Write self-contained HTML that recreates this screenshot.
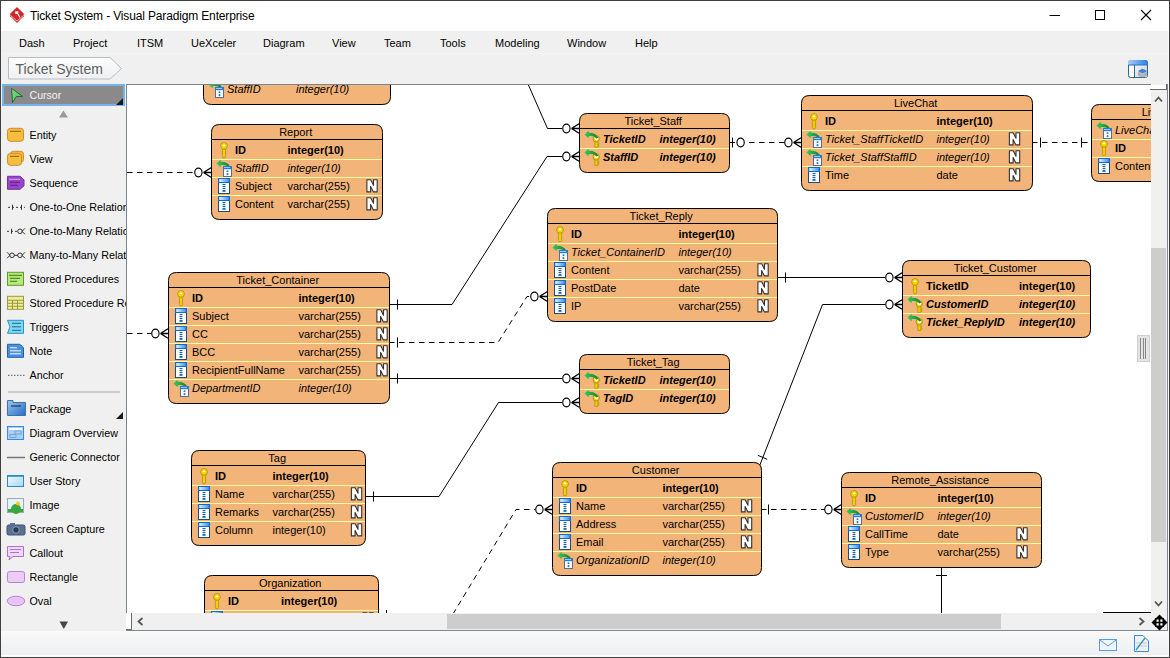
<!DOCTYPE html>
<html><head><meta charset="utf-8">
<style>
*{margin:0;padding:0;box-sizing:border-box}
html,body{width:1170px;height:658px;overflow:hidden;background:#f0f0f0;font-family:"Liberation Sans",sans-serif;position:relative}
.abs{position:absolute}
#titlebar{left:0;top:0;width:1170px;height:31px;background:#fff}
#menubar{left:0;top:31px;width:1170px;height:22px;background:#f0f0f0}
#menuline{left:0;top:53px;width:1170px;height:1px;background:#f3f3f3}
#crumbbar{left:0;top:54px;width:1170px;height:30px;background:#f0f0f0}
#palette{left:0;top:84px;width:126px;height:547px;background:#f0f0f0}
#canvas{left:127px;top:85px;width:1024px;height:528px;background:#fff;overflow:hidden}
.wb{background:#404040}
svg text{font-family:"Liberation Sans",sans-serif}
.t{font-size:11px;fill:#000}
.r{font-size:11px;fill:#000}
.b{font-size:11px;font-weight:bold;fill:#000}
.i{font-size:11px;font-style:italic;fill:#000}
.bi{font-size:11px;font-weight:bold;font-style:italic;fill:#000}
.nn{font-size:13px;font-weight:bold;fill:#fff;stroke:#333;stroke-width:1.6px;paint-order:stroke;font-family:"Liberation Sans",sans-serif}
.p{font-size:10.75px;fill:#000}
.menu{position:absolute;top:37px;font-size:11px;color:#000;white-space:nowrap}
</style></head><body>
<div id="titlebar" class="abs"></div>
<div class="abs" style="left:30px;top:9px;font-size:12px;letter-spacing:-0.15px;color:#000;white-space:nowrap">Ticket System - Visual Paradigm Enterprise</div>
<svg class="abs" style="left:0;top:0" width="30" height="30">
  <path d="M17,7 L23.9,13.8 L23.7,16.2 L17,22.9 L10.3,16.2 L10.1,13.8 Z" fill="#D0282A"/>
  <path d="M10.4,15.3 L17,21.1 L23.6,15.3" fill="none" stroke="#fff" stroke-width="0.75" opacity="0.85"/>
  <path d="M15,11.4 L18.4,11.2 L18.2,13.2 L20.4,17.3 L19.6,17.7 L17.2,13.9 L15.3,14 Z" fill="#fff"/>
</svg>
<svg class="abs" style="left:1040px;top:0" width="120" height="31">
  <line x1="9.5" y1="15.5" x2="20" y2="15.5" stroke="#000" stroke-width="1"/>
  <rect x="55.5" y="10.5" width="9" height="9" fill="none" stroke="#000" stroke-width="1"/>
  <path d="M101,10 L111,20 M111,10 L101,20" stroke="#000" stroke-width="1.1"/>
</svg>
<div id="menubar" class="abs"></div>
<div id="menuline" class="abs"></div>
<div id="crumbbar" class="abs"></div>
<div class="menu" style="left:19px">Dash</div>
<div class="menu" style="left:73px">Project</div>
<div class="menu" style="left:137px">ITSM</div>
<div class="menu" style="left:191px">UeXceler</div>
<div class="menu" style="left:263px">Diagram</div>
<div class="menu" style="left:332px">View</div>
<div class="menu" style="left:384px">Team</div>
<div class="menu" style="left:440px">Tools</div>
<div class="menu" style="left:495px">Modeling</div>
<div class="menu" style="left:567px">Window</div>
<div class="menu" style="left:635px">Help</div>
<svg class="abs" style="left:0;top:54px" width="140" height="30">
  <defs><linearGradient id="bc" x1="0" y1="0" x2="0" y2="1"><stop offset="0" stop-color="#fdfdfd"/><stop offset="1" stop-color="#eef0f2"/></linearGradient></defs>
  <path d="M8.5,3.5 H110 L121.5,14.5 L110,25 H8.5 Z" fill="url(#bc)" stroke="#b9bdc4" stroke-width="1"/>
  <text x="15.5" y="19.8" font-size="14px" fill="#5e5e5e" style="font-family:'Liberation Sans',sans-serif">Ticket System</text>
</svg>
<svg class="abs" style="left:1126px;top:58px" width="24" height="24">
  <defs><linearGradient id="tbh" x1="0" y1="0" x2="1" y2="0"><stop offset="0" stop-color="#a8d0f8"/><stop offset="1" stop-color="#2a7ce8"/></linearGradient>
  <linearGradient id="tbp" x1="0" y1="0" x2="1" y2="1"><stop offset="0" stop-color="#f4f4f4"/><stop offset="1" stop-color="#cfcfcf"/></linearGradient></defs>
  <rect x="2.5" y="2.5" width="19" height="17" rx="2" fill="#fff" stroke="#2a6a90"/>
  <rect x="9" y="7" width="12" height="12" fill="url(#tbp)"/>
  <path d="M2,7 V4.5 Q2,2 4.5,2 H19.5 Q22,2 22,4.5 V7 Z" fill="url(#tbh)"/>
  <line x1="2.5" y1="7" x2="21.5" y2="7" stroke="#2a70c0"/>
  <line x1="8.5" y1="7" x2="8.5" y2="20" stroke="#2a6a90"/>
  <path d="M12,17 L16.5,14.8 L21,17 L16.5,19.2 Z" fill="#b8bcc8" stroke="#8a8e9a" stroke-width="0.5"/>
  <path d="M12,15 L16.5,12.8 L21,15 L16.5,17.2 Z" fill="#c8ccd8" stroke="#8a8e9a" stroke-width="0.5"/>
  <path d="M12.5,13 L16.5,11 L20.5,13 L16.5,15 Z" fill="#3a88e8" stroke="#2a60b0" stroke-width="0.5"/>
</svg>
<div id="palette" class="abs"></div>
<!-- cursor selected -->
<div class="abs" style="left:2px;top:84px;width:123px;height:22px;background:#76b2ec"></div>
<div class="abs" style="left:4px;top:86px;width:119px;height:18px;background:#8a8a8a"></div>
<svg class="abs" style="left:0;top:84px" width="126" height="547">
  <defs><linearGradient id="pkg" x1="0" y1="0" x2="1" y2="1"><stop offset="0" stop-color="#9cc8f0"/><stop offset="1" stop-color="#2a6ac0"/></linearGradient>
  <linearGradient id="usg" x1="0" y1="0" x2="1" y2="1"><stop offset="0" stop-color="#f0f8ff"/><stop offset="1" stop-color="#a8d8f0"/></linearGradient></defs>
  <defs><linearGradient id="cur" x1="0" y1="0" x2="1" y2="1"><stop offset="0" stop-color="#90c890"/><stop offset="1" stop-color="#20e040"/></linearGradient></defs><path d="M11.5,4.3 L22.6,12.4 L16.3,12.6 L12.5,18.6 Z" fill="url(#cur)" stroke="#2a5a38" stroke-width="0.9" stroke-linejoin="round"/>
  <text x="29.5" y="14.7" class="p" style="fill:#f2f2f2;font-size:10.6px">Cursor</text>
  <path d="M123,14 L123,21 L116,21 Z" fill="#1a1a1a"/>
  <path d="M63.5,26.5 L68,33.5 L59,33.5 Z" fill="#9a9a9a"/>
  <line x1="8" y1="308" x2="120" y2="308" stroke="#c8c8c8" stroke-width="2"/>
  <path d="M123,328 L123,335 L116,335 Z" fill="#1a1a1a"/>
  <path d="M59.5,537.5 L68,537.5 L63.8,545 Z" fill="#444"/>
  <g transform="translate(0,-84)">
<rect x="7.5" y="128.3" width="16" height="13" rx="3" fill="#F7BE3E" stroke="#D08A2A"/><line x1="10" y1="131.3" x2="21" y2="131.3" stroke="#8a5a10"/>
<text x="29.5" y="138.8" class="p">Entity</text>
<rect x="10.5" y="151.3" width="13" height="11" rx="3" fill="#F7BE3E" stroke="#D08A2A"/><rect x="7.5" y="153.3" width="14" height="12" rx="3" fill="#F7BE3E" stroke="#D08A2A"/><line x1="10" y1="156.3" x2="19" y2="156.3" stroke="#8a5a10"/>
<text x="29.5" y="162.8" class="p">View</text>
<path d="M7.5,176.3 H20 L24,179.8 V185.8 L20,189.3 H7.5 Z" fill="#9B45C8" stroke="#7030A0"/><line x1="9" y1="179.3" x2="20" y2="179.3" stroke="#D8A8F0"/><line x1="10" y1="182.3" x2="20" y2="182.3" stroke="#5a2080"/><line x1="10" y1="185.3" x2="18" y2="185.3" stroke="#5a2080"/>
<text x="29.5" y="186.8" class="p">Sequence</text>
<path d="M8,207.3 H25" stroke="#333" stroke-dasharray="2,2"/><line x1="12.5" y1="204.8" x2="12.5" y2="209.8" stroke="#333"/><line x1="21.5" y1="204.8" x2="21.5" y2="209.8" stroke="#333"/>
<text x="29.5" y="210.8" class="p">One-to-One Relationship</text>
<path d="M7,231.3 H18" stroke="#333" stroke-dasharray="2,2"/><line x1="11.5" y1="228.8" x2="11.5" y2="233.8" stroke="#333"/><circle cx="20" cy="231.3" r="2.3" fill="none" stroke="#333"/><path d="M22,231.3 L25,228.3 M22,231.3 L25,234.3" stroke="#333" fill="none"/>
<text x="29.5" y="234.8" class="p">One-to-Many Relationship</text>
<path d="M7,252.3 L10,255.3 L7,258.3" stroke="#333" fill="none"/><circle cx="12" cy="255.3" r="2.3" fill="none" stroke="#333"/><path d="M14,255.3 H18" stroke="#333"/><circle cx="20" cy="255.3" r="2.3" fill="none" stroke="#333"/><path d="M22,255.3 L25,252.3 M22,255.3 L25,258.3" stroke="#333" fill="none"/>
<text x="29.5" y="258.8" class="p">Many-to-Many Relationship</text>
<rect x="7.5" y="272.3" width="16" height="13" fill="#B8E878" stroke="#5A9A30"/><line x1="9" y1="275.3" x2="22" y2="275.3" stroke="#3a7a20"/><line x1="10" y1="278.3" x2="20" y2="278.3" stroke="#3a7a20"/><line x1="10" y1="281.3" x2="17" y2="281.3" stroke="#3a7a20"/>
<text x="29.5" y="282.8" class="p">Stored Procedures</text>
<rect x="7.5" y="296.3" width="16" height="13" fill="#EEEE9A" stroke="#9A9A40"/><path d="M7.5,300.3 H23.5 M7.5,303.3 H23.5 M7.5,306.3 H23.5 M12.5,300.3 V309.3 M17.5,300.3 V309.3" stroke="#9A9A40"/>
<text x="29.5" y="306.8" class="p">Stored Procedure Resultset</text>
<path d="M7.5,320.3 H23.5 V333.3 H7.5 L10,326.8 Z" fill="#7ED8F0" stroke="#2A90C0"/><line x1="12" y1="323.3" x2="21" y2="323.3" stroke="#1a6a90"/><line x1="12" y1="326.8" x2="21" y2="326.8" stroke="#1a6a90"/><line x1="12" y1="330.3" x2="21" y2="330.3" stroke="#1a6a90"/>
<text x="29.5" y="330.8" class="p">Triggers</text>
<path d="M7.5,344.3 H20 L23.5,347.8 V357.3 H7.5 Z" fill="#4A90E0" stroke="#2060B0"/><line x1="10" y1="347.8" x2="17" y2="347.8" stroke="#fff"/><line x1="10" y1="350.8" x2="21" y2="350.8" stroke="#fff"/><line x1="10" y1="353.8" x2="21" y2="353.8" stroke="#fff"/>
<text x="29.5" y="354.8" class="p">Note</text>
<path d="M8,375.3 H25" stroke="#555" stroke-dasharray="1.5,1.5"/>
<text x="29.5" y="378.8" class="p">Anchor</text>
<path d="M7.5,400.5 H13 V402.5 H25.5 V415.5 H7.5 Z" fill="url(#pkg)" stroke="#3A72B0"/><line x1="11" y1="406" x2="21" y2="406" stroke="#1a3a60" stroke-width="1.2"/>
<text x="29.5" y="413" class="p">Package</text>
<rect x="7.5" y="426.5" width="16" height="13" fill="#A8D0F8" stroke="#3A8AE0"/><rect x="9" y="428" width="13" height="2" fill="#fff"/><rect x="15" y="431" width="6" height="3" fill="none" stroke="#6a9ad0" stroke-width="0.8"/><rect x="10" y="434.5" width="6" height="3" fill="none" stroke="#6a9ad0" stroke-width="0.8"/>
<text x="29.5" y="437" class="p">Diagram Overview</text>
<line x1="7" y1="457.5" x2="25" y2="457.5" stroke="#777" stroke-width="1.5"/>
<text x="29.5" y="461" class="p">Generic Connector</text>
<rect x="7.5" y="475.5" width="16" height="11" fill="url(#usg)" stroke="#2A8AC0"/><line x1="8" y1="476.5" x2="23" y2="476.5" stroke="#4aa0d8"/>
<text x="29.5" y="485" class="p">User Story</text>
<rect x="7.5" y="498.5" width="16" height="14" fill="#E8F0F8" stroke="#9AAABB"/><circle cx="16" cy="509" r="5" fill="#3AA840"/><circle cx="18" cy="503.5" r="2" fill="#F8C820"/><rect x="8" y="509" width="15" height="3" fill="#3AA840"/>
<text x="29.5" y="509" class="p">Image</text>
<rect x="7" y="525" width="18" height="10" rx="1.5" fill="#5A7090" stroke="#405070"/><rect x="10" y="523" width="5" height="3" fill="#5A7090"/><circle cx="16" cy="530" r="3.3" fill="#2a3a50" stroke="#8aa0c0"/>
<text x="29.5" y="533" class="p">Screen Capture</text>
<path d="M7.5,546.5 H23.5 V556.5 H13 L9,560 L10,556.5 H7.5 Z" fill="#F0D8F8" stroke="#B070D0"/><line x1="10" y1="549.5" x2="21" y2="549.5" stroke="#B070D0"/><line x1="10" y1="552.5" x2="19" y2="552.5" stroke="#B070D0"/>
<text x="29.5" y="557" class="p">Callout</text>
<rect x="7.5" y="571.5" width="17" height="11" rx="2" fill="#EACCF4" stroke="#B880D0"/>
<text x="29.5" y="581" class="p">Rectangle</text>
<ellipse cx="16" cy="601" rx="8.8" ry="4.8" fill="#E8C4F4" stroke="#C080E0"/>
<text x="29.5" y="605" class="p">Oval</text>
  </g>
</svg>
<!-- canvas -->
<div class="abs" style="left:126px;top:84px;width:1025px;height:1px;background:#7b8290"></div>
<div class="abs" style="left:126px;top:84px;width:1px;height:529px;background:#7b8290"></div>
<div id="canvas" class="abs">
<svg width="1024" height="528" style="position:absolute;left:0;top:0">
<g transform="translate(-127,-85)">
<defs><linearGradient id="hg" x1="0" y1="0" x2="1" y2="0"><stop offset="0" stop-color="#e0f0ff"/><stop offset="1" stop-color="#4a90e8"/></linearGradient><linearGradient id="ag" x1="0" y1="0" x2="1" y2="0"><stop offset="0" stop-color="#30d060"/><stop offset="1" stop-color="#108030"/></linearGradient></defs><path d="M528,84 L547.5,128.5 L562,128.5" fill="none" stroke="#000" stroke-width="1"/>
<path d="M571.5,128.5 L579,123.7 M571.5,128.5 L579,128.5 M571.5,128.5 L579,133.3" fill="none" stroke="#000" stroke-width="1.35"/>
<ellipse cx="566.4" cy="128.5" rx="3.65" ry="4.35" fill="#fff" stroke="#000" stroke-width="1.15"/>
<path d="M389,304.5 L452,304.5 L547,156.5 L562,156.5" fill="none" stroke="#000" stroke-width="1"/>
<path d="M571.5,156.5 L579,151.7 M571.5,156.5 L579,156.5 M571.5,156.5 L579,161.3" fill="none" stroke="#000" stroke-width="1.35"/>
<ellipse cx="566.4" cy="156.5" rx="3.65" ry="4.35" fill="#fff" stroke="#000" stroke-width="1.15"/>
<line x1="397.5" y1="299.5" x2="397.5" y2="309.5" stroke="#000" stroke-width="1"/>
<path d="M389,342.5 L498,342.5 L527,296.5 L530,296.5" fill="none" stroke="#000" stroke-width="1" stroke-dasharray="5.5,4.5"/>
<path d="M539.5,296.5 L547,291.7 M539.5,296.5 L547,296.5 M539.5,296.5 L547,301.3" fill="none" stroke="#000" stroke-width="1.35"/>
<ellipse cx="534.4" cy="296.5" rx="3.65" ry="4.35" fill="#fff" stroke="#000" stroke-width="1.15"/>
<line x1="397.5" y1="337.5" x2="397.5" y2="347.5" stroke="#000" stroke-width="1"/>
<path d="M389,378.5 L562,378.5" fill="none" stroke="#000" stroke-width="1"/>
<path d="M571.5,378.5 L579,373.7 M571.5,378.5 L579,378.5 M571.5,378.5 L579,383.3" fill="none" stroke="#000" stroke-width="1.35"/>
<ellipse cx="566.4" cy="378.5" rx="3.65" ry="4.35" fill="#fff" stroke="#000" stroke-width="1.15"/>
<line x1="397.5" y1="373.5" x2="397.5" y2="383.5" stroke="#000" stroke-width="1"/>
<path d="M365,496.5 L439,496.5 L498.5,402.5 L562,402.5" fill="none" stroke="#000" stroke-width="1"/>
<path d="M571.5,402.5 L579,397.7 M571.5,402.5 L579,402.5 M571.5,402.5 L579,407.3" fill="none" stroke="#000" stroke-width="1.35"/>
<ellipse cx="566.4" cy="402.5" rx="3.65" ry="4.35" fill="#fff" stroke="#000" stroke-width="1.15"/>
<line x1="373.5" y1="491.5" x2="373.5" y2="501.5" stroke="#000" stroke-width="1"/>
<path d="M127,172.5 L194,172.5" fill="none" stroke="#000" stroke-width="1" stroke-dasharray="5.5,4.5"/>
<path d="M203.5,172.5 L211,167.7 M203.5,172.5 L211,172.5 M203.5,172.5 L211,177.3" fill="none" stroke="#000" stroke-width="1.35"/>
<ellipse cx="198.4" cy="172.5" rx="3.65" ry="4.35" fill="#fff" stroke="#000" stroke-width="1.15"/>
<path d="M127,333.5 L152,333.5" fill="none" stroke="#000" stroke-width="1" stroke-dasharray="5.5,4.5"/>
<path d="M160.5,333.5 L168,328.7 M160.5,333.5 L168,333.5 M160.5,333.5 L168,338.3" fill="none" stroke="#000" stroke-width="1.35"/>
<ellipse cx="155.4" cy="333.5" rx="3.65" ry="4.35" fill="#fff" stroke="#000" stroke-width="1.15"/>
<path d="M729,142.5 L735,142.5" fill="none" stroke="#000" stroke-width="1"/>
<line x1="732.5" y1="137.5" x2="732.5" y2="147.5" stroke="#000" stroke-width="1"/>
<ellipse cx="740.6" cy="142.5" rx="3.65" ry="4.35" fill="#fff" stroke="#000" stroke-width="1.15"/>
<path d="M749,142.5 L785,142.5" fill="none" stroke="#000" stroke-width="1" stroke-dasharray="5.5,4.5"/>
<path d="M793.5,142.5 L801,137.7 M793.5,142.5 L801,142.5 M793.5,142.5 L801,147.3" fill="none" stroke="#000" stroke-width="1.35"/>
<ellipse cx="788.4" cy="142.5" rx="3.65" ry="4.35" fill="#fff" stroke="#000" stroke-width="1.15"/>
<path d="M1032,142.5 L1091,142.5" fill="none" stroke="#000" stroke-width="1" stroke-dasharray="5.5,4.5"/>
<line x1="1040.5" y1="137.5" x2="1040.5" y2="147.5" stroke="#000" stroke-width="1"/>
<line x1="1081.5" y1="137.5" x2="1081.5" y2="147.5" stroke="#000" stroke-width="1"/>
<path d="M777,277.5 L885,277.5" fill="none" stroke="#000" stroke-width="1"/>
<path d="M894.5,277.5 L902,272.7 M894.5,277.5 L902,277.5 M894.5,277.5 L902,282.3" fill="none" stroke="#000" stroke-width="1.35"/>
<ellipse cx="889.4" cy="277.5" rx="3.65" ry="4.35" fill="#fff" stroke="#000" stroke-width="1.15"/>
<line x1="785.5" y1="272.5" x2="785.5" y2="282.5" stroke="#000" stroke-width="1"/>
<path d="M759.5,466 L822.5,304.5 L885,304.5" fill="none" stroke="#000" stroke-width="1"/>
<path d="M894.5,304.5 L902,299.7 M894.5,304.5 L902,304.5 M894.5,304.5 L902,309.3" fill="none" stroke="#000" stroke-width="1.35"/>
<ellipse cx="889.4" cy="304.5" rx="3.65" ry="4.35" fill="#fff" stroke="#000" stroke-width="1.15"/>
<line x1="757.8" y1="455.3" x2="767.2" y2="459.3" stroke="#000" stroke-width="1"/>
<path d="M761,509.5 L825,509.5" fill="none" stroke="#000" stroke-width="1" stroke-dasharray="5.5,4.5"/>
<path d="M833.5,509.5 L841,504.7 M833.5,509.5 L841,509.5 M833.5,509.5 L841,514.3" fill="none" stroke="#000" stroke-width="1.35"/>
<ellipse cx="828.4" cy="509.5" rx="3.65" ry="4.35" fill="#fff" stroke="#000" stroke-width="1.15"/>
<line x1="768.5" y1="504.5" x2="768.5" y2="514.5" stroke="#000" stroke-width="1"/>
<path d="M941.5,567 L941.5,613" fill="none" stroke="#000" stroke-width="1"/>
<line x1="936" y1="575.5" x2="947" y2="575.5" stroke="#000" stroke-width="1"/>
<path d="M453,614 L516,509.5 L535,509.5" fill="none" stroke="#000" stroke-width="1" stroke-dasharray="5.5,4.5"/>
<path d="M544.5,509.5 L552,504.7 M544.5,509.5 L552,509.5 M544.5,509.5 L552,514.3" fill="none" stroke="#000" stroke-width="1.35"/>
<ellipse cx="539.4" cy="509.5" rx="3.65" ry="4.35" fill="#fff" stroke="#000" stroke-width="1.15"/>
<line x1="386.5" y1="610" x2="386.5" y2="613" stroke="#000" stroke-width="1"/>
<line x1="1103" y1="612.5" x2="1151" y2="612.5" stroke="#000" stroke-width="1"/>
<path d="M211.5,9.5 H382.5 Q390.5,9.5 390.5,17.5 V96.5 Q390.5,104.5 382.5,104.5 H211.5 Q203.5,104.5 203.5,96.5 V17.5 Q203.5,9.5 211.5,9.5 Z" fill="#F3B47A" stroke="#000" stroke-width="1"/>
<line x1="203" y1="24.5" x2="391" y2="24.5" stroke="#000" stroke-width="1"/>
<line x1="204" y1="44.5" x2="390" y2="44.5" stroke="#FFFFA0" stroke-width="1"/>
<line x1="204" y1="62.5" x2="390" y2="62.5" stroke="#FFFFA0" stroke-width="1"/>
<line x1="204" y1="80.5" x2="390" y2="80.5" stroke="#FFFFA0" stroke-width="1"/>
<g transform="translate(212,27)"><path d="M2.4,6 V14.6 Q2.4,15.8 4,15.8 Q5.6,15.8 5.6,14.6 V6 Z" fill="#F0CC00" stroke="#B08C00" stroke-width="0.7"/><circle cx="4" cy="3.9" r="3.4" fill="#F4D600" stroke="#B08C00" stroke-width="0.8"/><ellipse cx="4" cy="3.3" rx="1.3" ry="0.9" fill="#fff"/></g>
<text x="227" y="39" class="b">x</text>
<text x="296" y="39" class="b">x</text>
<g transform="translate(210,45)"><rect x="0.5" y="0.5" width="11" height="15" fill="#fff" stroke="#1a4a88" stroke-width="1"/><rect x="0" y="0" width="12" height="5" fill="#0a6ad8"/><rect x="1.2" y="1" width="9.6" height="3" fill="url(#hg)"/><ellipse cx="6" cy="6.6" rx="1.8" ry="0.6" fill="#0a5a9a"/><ellipse cx="6" cy="8.6" rx="1.8" ry="0.6" fill="#0a5a9a"/><ellipse cx="6" cy="10.6" rx="1.8" ry="0.6" fill="#0a5a9a"/><ellipse cx="6" cy="12.9" rx="1.8" ry="0.9" fill="#0a5a9a"/></g>
<text x="227" y="57" class="r">x</text>
<text x="296" y="57" class="r">x</text>
<g transform="translate(210,63)"><rect x="0.5" y="0.5" width="11" height="15" fill="#fff" stroke="#1a4a88" stroke-width="1"/><rect x="0" y="0" width="12" height="5" fill="#0a6ad8"/><rect x="1.2" y="1" width="9.6" height="3" fill="url(#hg)"/><ellipse cx="6" cy="6.6" rx="1.8" ry="0.6" fill="#0a5a9a"/><ellipse cx="6" cy="8.6" rx="1.8" ry="0.6" fill="#0a5a9a"/><ellipse cx="6" cy="10.6" rx="1.8" ry="0.6" fill="#0a5a9a"/><ellipse cx="6" cy="12.9" rx="1.8" ry="0.9" fill="#0a5a9a"/></g>
<text x="227" y="75" class="r">x</text>
<text x="296" y="75" class="r">x</text>
<path transform="translate(208,81)" d="M0.4,3.6 L4.6,-0.2 L4.6,1.7 C8.5,1.3 12.5,2.8 14.2,6.8 L12.2,7.4 C10.5,5.0 7.8,4.6 4.6,5.2 L4.6,7.2 Z" fill="url(#ag)"/><g transform="translate(215,87)"><rect x="0.5" y="0.5" width="8" height="10" fill="#fff" stroke="#5a6a98" stroke-width="1"/><rect x="0" y="0" width="9" height="3.2" fill="#2a7ad8"/><rect x="1" y="1" width="6" height="1" fill="#9ac8f8"/><ellipse cx="4.5" cy="5.2" rx="1" ry="0.9" fill="#2a7ab8"/><ellipse cx="4.5" cy="8.2" rx="1" ry="1.1" fill="#2a7ab8"/></g>
<text x="227" y="93" class="i">StaffID</text>
<text x="296" y="93" class="i">integer(10)</text>
<path d="M219.5,124.5 H374.5 Q382.5,124.5 382.5,132.5 V211.5 Q382.5,219.5 374.5,219.5 H219.5 Q211.5,219.5 211.5,211.5 V132.5 Q211.5,124.5 219.5,124.5 Z" fill="#F3B47A" stroke="#000" stroke-width="1"/>
<line x1="211" y1="139.5" x2="383" y2="139.5" stroke="#000" stroke-width="1"/>
<line x1="212" y1="159.5" x2="382" y2="159.5" stroke="#FFFFA0" stroke-width="1"/>
<line x1="212" y1="177.5" x2="382" y2="177.5" stroke="#FFFFA0" stroke-width="1"/>
<line x1="212" y1="195.5" x2="382" y2="195.5" stroke="#FFFFA0" stroke-width="1"/>
<text x="295.7" y="136" text-anchor="middle" class="t">Report</text>
<g transform="translate(220,142)"><path d="M2.4,6 V14.6 Q2.4,15.8 4,15.8 Q5.6,15.8 5.6,14.6 V6 Z" fill="#F0CC00" stroke="#B08C00" stroke-width="0.7"/><circle cx="4" cy="3.9" r="3.4" fill="#F4D600" stroke="#B08C00" stroke-width="0.8"/><ellipse cx="4" cy="3.3" rx="1.3" ry="0.9" fill="#fff"/></g>
<text x="235" y="154" class="b">ID</text>
<text x="287.5" y="154" class="b">integer(10)</text>
<path transform="translate(216,160)" d="M0.4,3.6 L4.6,-0.2 L4.6,1.7 C8.5,1.3 12.5,2.8 14.2,6.8 L12.2,7.4 C10.5,5.0 7.8,4.6 4.6,5.2 L4.6,7.2 Z" fill="url(#ag)"/><g transform="translate(223,166)"><rect x="0.5" y="0.5" width="8" height="10" fill="#fff" stroke="#5a6a98" stroke-width="1"/><rect x="0" y="0" width="9" height="3.2" fill="#2a7ad8"/><rect x="1" y="1" width="6" height="1" fill="#9ac8f8"/><ellipse cx="4.5" cy="5.2" rx="1" ry="0.9" fill="#2a7ab8"/><ellipse cx="4.5" cy="8.2" rx="1" ry="1.1" fill="#2a7ab8"/></g>
<text x="235" y="172" class="i">StaffID</text>
<text x="287.5" y="172" class="i">integer(10)</text>
<g transform="translate(218,178)"><rect x="0.5" y="0.5" width="11" height="15" fill="#fff" stroke="#1a4a88" stroke-width="1"/><rect x="0" y="0" width="12" height="5" fill="#0a6ad8"/><rect x="1.2" y="1" width="9.6" height="3" fill="url(#hg)"/><ellipse cx="6" cy="6.6" rx="1.8" ry="0.6" fill="#0a5a9a"/><ellipse cx="6" cy="8.6" rx="1.8" ry="0.6" fill="#0a5a9a"/><ellipse cx="6" cy="10.6" rx="1.8" ry="0.6" fill="#0a5a9a"/><ellipse cx="6" cy="12.9" rx="1.8" ry="0.9" fill="#0a5a9a"/></g>
<text x="235" y="190" class="r">Subject</text>
<text x="287.5" y="190" class="r">varchar(255)</text>
<path transform="translate(366,179)" d="M0.9,0.7 H4.7 L7.5,6.2 V0.7 H11.2 V12.9 H7.4 L4.6,7.5 V12.9 H0.9 Z" fill="#fff" stroke="#333" stroke-width="1.1" stroke-linejoin="round"/>
<g transform="translate(218,196)"><rect x="0.5" y="0.5" width="11" height="15" fill="#fff" stroke="#1a4a88" stroke-width="1"/><rect x="0" y="0" width="12" height="5" fill="#0a6ad8"/><rect x="1.2" y="1" width="9.6" height="3" fill="url(#hg)"/><ellipse cx="6" cy="6.6" rx="1.8" ry="0.6" fill="#0a5a9a"/><ellipse cx="6" cy="8.6" rx="1.8" ry="0.6" fill="#0a5a9a"/><ellipse cx="6" cy="10.6" rx="1.8" ry="0.6" fill="#0a5a9a"/><ellipse cx="6" cy="12.9" rx="1.8" ry="0.9" fill="#0a5a9a"/></g>
<text x="235" y="208" class="r">Content</text>
<text x="287.5" y="208" class="r">varchar(255)</text>
<path transform="translate(366,197)" d="M0.9,0.7 H4.7 L7.5,6.2 V0.7 H11.2 V12.9 H7.4 L4.6,7.5 V12.9 H0.9 Z" fill="#fff" stroke="#333" stroke-width="1.1" stroke-linejoin="round"/>
<path d="M176.5,272.5 H381.5 Q389.5,272.5 389.5,280.5 V395.5 Q389.5,403.5 381.5,403.5 H176.5 Q168.5,403.5 168.5,395.5 V280.5 Q168.5,272.5 176.5,272.5 Z" fill="#F3B47A" stroke="#000" stroke-width="1"/>
<line x1="168" y1="287.5" x2="390" y2="287.5" stroke="#000" stroke-width="1"/>
<line x1="169" y1="307.5" x2="389" y2="307.5" stroke="#FFFFA0" stroke-width="1"/>
<line x1="169" y1="325.5" x2="389" y2="325.5" stroke="#FFFFA0" stroke-width="1"/>
<line x1="169" y1="343.5" x2="389" y2="343.5" stroke="#FFFFA0" stroke-width="1"/>
<line x1="169" y1="361.5" x2="389" y2="361.5" stroke="#FFFFA0" stroke-width="1"/>
<line x1="169" y1="379.5" x2="389" y2="379.5" stroke="#FFFFA0" stroke-width="1"/>
<text x="277.7" y="284" text-anchor="middle" class="t">Ticket_Container</text>
<g transform="translate(177,290)"><path d="M2.4,6 V14.6 Q2.4,15.8 4,15.8 Q5.6,15.8 5.6,14.6 V6 Z" fill="#F0CC00" stroke="#B08C00" stroke-width="0.7"/><circle cx="4" cy="3.9" r="3.4" fill="#F4D600" stroke="#B08C00" stroke-width="0.8"/><ellipse cx="4" cy="3.3" rx="1.3" ry="0.9" fill="#fff"/></g>
<text x="192" y="302" class="b">ID</text>
<text x="298.5" y="302" class="b">integer(10)</text>
<g transform="translate(175,308)"><rect x="0.5" y="0.5" width="11" height="15" fill="#fff" stroke="#1a4a88" stroke-width="1"/><rect x="0" y="0" width="12" height="5" fill="#0a6ad8"/><rect x="1.2" y="1" width="9.6" height="3" fill="url(#hg)"/><ellipse cx="6" cy="6.6" rx="1.8" ry="0.6" fill="#0a5a9a"/><ellipse cx="6" cy="8.6" rx="1.8" ry="0.6" fill="#0a5a9a"/><ellipse cx="6" cy="10.6" rx="1.8" ry="0.6" fill="#0a5a9a"/><ellipse cx="6" cy="12.9" rx="1.8" ry="0.9" fill="#0a5a9a"/></g>
<text x="192" y="320" class="r">Subject</text>
<text x="298.5" y="320" class="r">varchar(255)</text>
<path transform="translate(376,309)" d="M0.9,0.7 H4.7 L7.5,6.2 V0.7 H11.2 V12.9 H7.4 L4.6,7.5 V12.9 H0.9 Z" fill="#fff" stroke="#333" stroke-width="1.1" stroke-linejoin="round"/>
<g transform="translate(175,326)"><rect x="0.5" y="0.5" width="11" height="15" fill="#fff" stroke="#1a4a88" stroke-width="1"/><rect x="0" y="0" width="12" height="5" fill="#0a6ad8"/><rect x="1.2" y="1" width="9.6" height="3" fill="url(#hg)"/><ellipse cx="6" cy="6.6" rx="1.8" ry="0.6" fill="#0a5a9a"/><ellipse cx="6" cy="8.6" rx="1.8" ry="0.6" fill="#0a5a9a"/><ellipse cx="6" cy="10.6" rx="1.8" ry="0.6" fill="#0a5a9a"/><ellipse cx="6" cy="12.9" rx="1.8" ry="0.9" fill="#0a5a9a"/></g>
<text x="192" y="338" class="r">CC</text>
<text x="298.5" y="338" class="r">varchar(255)</text>
<path transform="translate(376,327)" d="M0.9,0.7 H4.7 L7.5,6.2 V0.7 H11.2 V12.9 H7.4 L4.6,7.5 V12.9 H0.9 Z" fill="#fff" stroke="#333" stroke-width="1.1" stroke-linejoin="round"/>
<g transform="translate(175,344)"><rect x="0.5" y="0.5" width="11" height="15" fill="#fff" stroke="#1a4a88" stroke-width="1"/><rect x="0" y="0" width="12" height="5" fill="#0a6ad8"/><rect x="1.2" y="1" width="9.6" height="3" fill="url(#hg)"/><ellipse cx="6" cy="6.6" rx="1.8" ry="0.6" fill="#0a5a9a"/><ellipse cx="6" cy="8.6" rx="1.8" ry="0.6" fill="#0a5a9a"/><ellipse cx="6" cy="10.6" rx="1.8" ry="0.6" fill="#0a5a9a"/><ellipse cx="6" cy="12.9" rx="1.8" ry="0.9" fill="#0a5a9a"/></g>
<text x="192" y="356" class="r">BCC</text>
<text x="298.5" y="356" class="r">varchar(255)</text>
<path transform="translate(376,345)" d="M0.9,0.7 H4.7 L7.5,6.2 V0.7 H11.2 V12.9 H7.4 L4.6,7.5 V12.9 H0.9 Z" fill="#fff" stroke="#333" stroke-width="1.1" stroke-linejoin="round"/>
<g transform="translate(175,362)"><rect x="0.5" y="0.5" width="11" height="15" fill="#fff" stroke="#1a4a88" stroke-width="1"/><rect x="0" y="0" width="12" height="5" fill="#0a6ad8"/><rect x="1.2" y="1" width="9.6" height="3" fill="url(#hg)"/><ellipse cx="6" cy="6.6" rx="1.8" ry="0.6" fill="#0a5a9a"/><ellipse cx="6" cy="8.6" rx="1.8" ry="0.6" fill="#0a5a9a"/><ellipse cx="6" cy="10.6" rx="1.8" ry="0.6" fill="#0a5a9a"/><ellipse cx="6" cy="12.9" rx="1.8" ry="0.9" fill="#0a5a9a"/></g>
<text x="192" y="374" class="r">RecipientFullName</text>
<text x="298.5" y="374" class="r">varchar(255)</text>
<path transform="translate(376,363)" d="M0.9,0.7 H4.7 L7.5,6.2 V0.7 H11.2 V12.9 H7.4 L4.6,7.5 V12.9 H0.9 Z" fill="#fff" stroke="#333" stroke-width="1.1" stroke-linejoin="round"/>
<path transform="translate(173,380)" d="M0.4,3.6 L4.6,-0.2 L4.6,1.7 C8.5,1.3 12.5,2.8 14.2,6.8 L12.2,7.4 C10.5,5.0 7.8,4.6 4.6,5.2 L4.6,7.2 Z" fill="url(#ag)"/><g transform="translate(180,386)"><rect x="0.5" y="0.5" width="8" height="10" fill="#fff" stroke="#5a6a98" stroke-width="1"/><rect x="0" y="0" width="9" height="3.2" fill="#2a7ad8"/><rect x="1" y="1" width="6" height="1" fill="#9ac8f8"/><ellipse cx="4.5" cy="5.2" rx="1" ry="0.9" fill="#2a7ab8"/><ellipse cx="4.5" cy="8.2" rx="1" ry="1.1" fill="#2a7ab8"/></g>
<text x="192" y="392" class="i">DepartmentID</text>
<text x="298.5" y="392" class="i">integer(10)</text>
<path d="M199.5,450.5 H357.5 Q365.5,450.5 365.5,458.5 V537.5 Q365.5,545.5 357.5,545.5 H199.5 Q191.5,545.5 191.5,537.5 V458.5 Q191.5,450.5 199.5,450.5 Z" fill="#F3B47A" stroke="#000" stroke-width="1"/>
<line x1="191" y1="465.5" x2="366" y2="465.5" stroke="#000" stroke-width="1"/>
<line x1="192" y1="485.5" x2="365" y2="485.5" stroke="#FFFFA0" stroke-width="1"/>
<line x1="192" y1="503.5" x2="365" y2="503.5" stroke="#FFFFA0" stroke-width="1"/>
<line x1="192" y1="521.5" x2="365" y2="521.5" stroke="#FFFFA0" stroke-width="1"/>
<text x="277.2" y="462" text-anchor="middle" class="t">Tag</text>
<g transform="translate(200,468)"><path d="M2.4,6 V14.6 Q2.4,15.8 4,15.8 Q5.6,15.8 5.6,14.6 V6 Z" fill="#F0CC00" stroke="#B08C00" stroke-width="0.7"/><circle cx="4" cy="3.9" r="3.4" fill="#F4D600" stroke="#B08C00" stroke-width="0.8"/><ellipse cx="4" cy="3.3" rx="1.3" ry="0.9" fill="#fff"/></g>
<text x="215" y="480" class="b">ID</text>
<text x="272.5" y="480" class="b">integer(10)</text>
<g transform="translate(198,486)"><rect x="0.5" y="0.5" width="11" height="15" fill="#fff" stroke="#1a4a88" stroke-width="1"/><rect x="0" y="0" width="12" height="5" fill="#0a6ad8"/><rect x="1.2" y="1" width="9.6" height="3" fill="url(#hg)"/><ellipse cx="6" cy="6.6" rx="1.8" ry="0.6" fill="#0a5a9a"/><ellipse cx="6" cy="8.6" rx="1.8" ry="0.6" fill="#0a5a9a"/><ellipse cx="6" cy="10.6" rx="1.8" ry="0.6" fill="#0a5a9a"/><ellipse cx="6" cy="12.9" rx="1.8" ry="0.9" fill="#0a5a9a"/></g>
<text x="215" y="498" class="r">Name</text>
<text x="272.5" y="498" class="r">varchar(255)</text>
<path transform="translate(350.5,487)" d="M0.9,0.7 H4.7 L7.5,6.2 V0.7 H11.2 V12.9 H7.4 L4.6,7.5 V12.9 H0.9 Z" fill="#fff" stroke="#333" stroke-width="1.1" stroke-linejoin="round"/>
<g transform="translate(198,504)"><rect x="0.5" y="0.5" width="11" height="15" fill="#fff" stroke="#1a4a88" stroke-width="1"/><rect x="0" y="0" width="12" height="5" fill="#0a6ad8"/><rect x="1.2" y="1" width="9.6" height="3" fill="url(#hg)"/><ellipse cx="6" cy="6.6" rx="1.8" ry="0.6" fill="#0a5a9a"/><ellipse cx="6" cy="8.6" rx="1.8" ry="0.6" fill="#0a5a9a"/><ellipse cx="6" cy="10.6" rx="1.8" ry="0.6" fill="#0a5a9a"/><ellipse cx="6" cy="12.9" rx="1.8" ry="0.9" fill="#0a5a9a"/></g>
<text x="215" y="516" class="r">Remarks</text>
<text x="272.5" y="516" class="r">varchar(255)</text>
<path transform="translate(350.5,505)" d="M0.9,0.7 H4.7 L7.5,6.2 V0.7 H11.2 V12.9 H7.4 L4.6,7.5 V12.9 H0.9 Z" fill="#fff" stroke="#333" stroke-width="1.1" stroke-linejoin="round"/>
<g transform="translate(198,522)"><rect x="0.5" y="0.5" width="11" height="15" fill="#fff" stroke="#1a4a88" stroke-width="1"/><rect x="0" y="0" width="12" height="5" fill="#0a6ad8"/><rect x="1.2" y="1" width="9.6" height="3" fill="url(#hg)"/><ellipse cx="6" cy="6.6" rx="1.8" ry="0.6" fill="#0a5a9a"/><ellipse cx="6" cy="8.6" rx="1.8" ry="0.6" fill="#0a5a9a"/><ellipse cx="6" cy="10.6" rx="1.8" ry="0.6" fill="#0a5a9a"/><ellipse cx="6" cy="12.9" rx="1.8" ry="0.9" fill="#0a5a9a"/></g>
<text x="215" y="534" class="r">Column</text>
<text x="272.5" y="534" class="r">integer(10)</text>
<path transform="translate(350.5,523)" d="M0.9,0.7 H4.7 L7.5,6.2 V0.7 H11.2 V12.9 H7.4 L4.6,7.5 V12.9 H0.9 Z" fill="#fff" stroke="#333" stroke-width="1.1" stroke-linejoin="round"/>
<path d="M212.5,575.5 H370.5 Q378.5,575.5 378.5,583.5 V644.5 Q378.5,652.5 370.5,652.5 H212.5 Q204.5,652.5 204.5,644.5 V583.5 Q204.5,575.5 212.5,575.5 Z" fill="#F3B47A" stroke="#000" stroke-width="1"/>
<line x1="204" y1="590.5" x2="379" y2="590.5" stroke="#000" stroke-width="1"/>
<line x1="205" y1="610.5" x2="378" y2="610.5" stroke="#FFFFA0" stroke-width="1"/>
<line x1="205" y1="628.5" x2="378" y2="628.5" stroke="#FFFFA0" stroke-width="1"/>
<text x="290.2" y="587" text-anchor="middle" class="t">Organization</text>
<g transform="translate(213,593)"><path d="M2.4,6 V14.6 Q2.4,15.8 4,15.8 Q5.6,15.8 5.6,14.6 V6 Z" fill="#F0CC00" stroke="#B08C00" stroke-width="0.7"/><circle cx="4" cy="3.9" r="3.4" fill="#F4D600" stroke="#B08C00" stroke-width="0.8"/><ellipse cx="4" cy="3.3" rx="1.3" ry="0.9" fill="#fff"/></g>
<text x="228" y="605" class="b">ID</text>
<text x="281" y="605" class="b">integer(10)</text>
<g transform="translate(211,611)"><rect x="0.5" y="0.5" width="11" height="15" fill="#fff" stroke="#1a4a88" stroke-width="1"/><rect x="0" y="0" width="12" height="5" fill="#0a6ad8"/><rect x="1.2" y="1" width="9.6" height="3" fill="url(#hg)"/><ellipse cx="6" cy="6.6" rx="1.8" ry="0.6" fill="#0a5a9a"/><ellipse cx="6" cy="8.6" rx="1.8" ry="0.6" fill="#0a5a9a"/><ellipse cx="6" cy="10.6" rx="1.8" ry="0.6" fill="#0a5a9a"/><ellipse cx="6" cy="12.9" rx="1.8" ry="0.9" fill="#0a5a9a"/></g>
<text x="228" y="623" class="r">Name</text>
<text x="281" y="623" class="r">varchar(255)</text>
<path transform="translate(362,612)" d="M0.9,0.7 H4.7 L7.5,6.2 V0.7 H11.2 V12.9 H7.4 L4.6,7.5 V12.9 H0.9 Z" fill="#fff" stroke="#333" stroke-width="1.1" stroke-linejoin="round"/>
<g transform="translate(211,629)"><rect x="0.5" y="0.5" width="11" height="15" fill="#fff" stroke="#1a4a88" stroke-width="1"/><rect x="0" y="0" width="12" height="5" fill="#0a6ad8"/><rect x="1.2" y="1" width="9.6" height="3" fill="url(#hg)"/><ellipse cx="6" cy="6.6" rx="1.8" ry="0.6" fill="#0a5a9a"/><ellipse cx="6" cy="8.6" rx="1.8" ry="0.6" fill="#0a5a9a"/><ellipse cx="6" cy="10.6" rx="1.8" ry="0.6" fill="#0a5a9a"/><ellipse cx="6" cy="12.9" rx="1.8" ry="0.9" fill="#0a5a9a"/></g>
<text x="228" y="641" class="r">x</text>
<text x="281" y="641" class="r">x</text>
<path transform="translate(362,630)" d="M0.9,0.7 H4.7 L7.5,6.2 V0.7 H11.2 V12.9 H7.4 L4.6,7.5 V12.9 H0.9 Z" fill="#fff" stroke="#333" stroke-width="1.1" stroke-linejoin="round"/>
<path d="M587.5,113.5 H721.5 Q729.5,113.5 729.5,121.5 V164.5 Q729.5,172.5 721.5,172.5 H587.5 Q579.5,172.5 579.5,164.5 V121.5 Q579.5,113.5 587.5,113.5 Z" fill="#F3B47A" stroke="#000" stroke-width="1"/>
<line x1="579" y1="128.5" x2="730" y2="128.5" stroke="#000" stroke-width="1"/>
<line x1="580" y1="148.5" x2="729" y2="148.5" stroke="#FFFFA0" stroke-width="1"/>
<text x="653.2" y="125" text-anchor="middle" class="t">Ticket_Staff</text>
<g transform="translate(592.5,135)"><path d="M2.3,5.5 V12.4 H5.2 V11.4 H6.3 V10.3 H5.2 V9.4 H6.3 V8.3 H5.2 V5.5 Z" fill="#F0CC00" stroke="#A08400" stroke-width="0.6"/><circle cx="3.7" cy="3.8" r="3.2" fill="#F4D600" stroke="#A08400" stroke-width="0.8"/><circle cx="3.9" cy="3.6" r="1.7" fill="#fff"/></g><path transform="translate(584,131)" d="M0.4,3.6 L4.6,-0.2 L4.6,1.7 C8.5,1.3 12.5,2.8 14.2,6.8 L12.2,7.4 C10.5,5.0 7.8,4.6 4.6,5.2 L4.6,7.2 Z" fill="url(#ag)"/>
<text x="603" y="143" class="bi">TicketID</text>
<text x="659.5" y="143" class="bi">integer(10)</text>
<g transform="translate(592.5,153)"><path d="M2.3,5.5 V12.4 H5.2 V11.4 H6.3 V10.3 H5.2 V9.4 H6.3 V8.3 H5.2 V5.5 Z" fill="#F0CC00" stroke="#A08400" stroke-width="0.6"/><circle cx="3.7" cy="3.8" r="3.2" fill="#F4D600" stroke="#A08400" stroke-width="0.8"/><circle cx="3.9" cy="3.6" r="1.7" fill="#fff"/></g><path transform="translate(584,149)" d="M0.4,3.6 L4.6,-0.2 L4.6,1.7 C8.5,1.3 12.5,2.8 14.2,6.8 L12.2,7.4 C10.5,5.0 7.8,4.6 4.6,5.2 L4.6,7.2 Z" fill="url(#ag)"/>
<text x="603" y="161" class="bi">StaffID</text>
<text x="659.5" y="161" class="bi">integer(10)</text>
<path d="M555.5,208.5 H769.5 Q777.5,208.5 777.5,216.5 V313.5 Q777.5,321.5 769.5,321.5 H555.5 Q547.5,321.5 547.5,313.5 V216.5 Q547.5,208.5 555.5,208.5 Z" fill="#F3B47A" stroke="#000" stroke-width="1"/>
<line x1="547" y1="223.5" x2="778" y2="223.5" stroke="#000" stroke-width="1"/>
<line x1="548" y1="243.5" x2="777" y2="243.5" stroke="#FFFFA0" stroke-width="1"/>
<line x1="548" y1="261.5" x2="777" y2="261.5" stroke="#FFFFA0" stroke-width="1"/>
<line x1="548" y1="279.5" x2="777" y2="279.5" stroke="#FFFFA0" stroke-width="1"/>
<line x1="548" y1="297.5" x2="777" y2="297.5" stroke="#FFFFA0" stroke-width="1"/>
<text x="661.2" y="220" text-anchor="middle" class="t">Ticket_Reply</text>
<g transform="translate(556,226)"><path d="M2.4,6 V14.6 Q2.4,15.8 4,15.8 Q5.6,15.8 5.6,14.6 V6 Z" fill="#F0CC00" stroke="#B08C00" stroke-width="0.7"/><circle cx="4" cy="3.9" r="3.4" fill="#F4D600" stroke="#B08C00" stroke-width="0.8"/><ellipse cx="4" cy="3.3" rx="1.3" ry="0.9" fill="#fff"/></g>
<text x="571" y="238" class="b">ID</text>
<text x="678.5" y="238" class="b">integer(10)</text>
<path transform="translate(552,244)" d="M0.4,3.6 L4.6,-0.2 L4.6,1.7 C8.5,1.3 12.5,2.8 14.2,6.8 L12.2,7.4 C10.5,5.0 7.8,4.6 4.6,5.2 L4.6,7.2 Z" fill="url(#ag)"/><g transform="translate(559,250)"><rect x="0.5" y="0.5" width="8" height="10" fill="#fff" stroke="#5a6a98" stroke-width="1"/><rect x="0" y="0" width="9" height="3.2" fill="#2a7ad8"/><rect x="1" y="1" width="6" height="1" fill="#9ac8f8"/><ellipse cx="4.5" cy="5.2" rx="1" ry="0.9" fill="#2a7ab8"/><ellipse cx="4.5" cy="8.2" rx="1" ry="1.1" fill="#2a7ab8"/></g>
<text x="571" y="256" class="i">Ticket_ContainerID</text>
<text x="678.5" y="256" class="i">integer(10)</text>
<g transform="translate(554,262)"><rect x="0.5" y="0.5" width="11" height="15" fill="#fff" stroke="#1a4a88" stroke-width="1"/><rect x="0" y="0" width="12" height="5" fill="#0a6ad8"/><rect x="1.2" y="1" width="9.6" height="3" fill="url(#hg)"/><ellipse cx="6" cy="6.6" rx="1.8" ry="0.6" fill="#0a5a9a"/><ellipse cx="6" cy="8.6" rx="1.8" ry="0.6" fill="#0a5a9a"/><ellipse cx="6" cy="10.6" rx="1.8" ry="0.6" fill="#0a5a9a"/><ellipse cx="6" cy="12.9" rx="1.8" ry="0.9" fill="#0a5a9a"/></g>
<text x="571" y="274" class="r">Content</text>
<text x="678.5" y="274" class="r">varchar(255)</text>
<path transform="translate(757,263)" d="M0.9,0.7 H4.7 L7.5,6.2 V0.7 H11.2 V12.9 H7.4 L4.6,7.5 V12.9 H0.9 Z" fill="#fff" stroke="#333" stroke-width="1.1" stroke-linejoin="round"/>
<g transform="translate(554,280)"><rect x="0.5" y="0.5" width="11" height="15" fill="#fff" stroke="#1a4a88" stroke-width="1"/><rect x="0" y="0" width="12" height="5" fill="#0a6ad8"/><rect x="1.2" y="1" width="9.6" height="3" fill="url(#hg)"/><ellipse cx="6" cy="6.6" rx="1.8" ry="0.6" fill="#0a5a9a"/><ellipse cx="6" cy="8.6" rx="1.8" ry="0.6" fill="#0a5a9a"/><ellipse cx="6" cy="10.6" rx="1.8" ry="0.6" fill="#0a5a9a"/><ellipse cx="6" cy="12.9" rx="1.8" ry="0.9" fill="#0a5a9a"/></g>
<text x="571" y="292" class="r">PostDate</text>
<text x="678.5" y="292" class="r">date</text>
<path transform="translate(757,281)" d="M0.9,0.7 H4.7 L7.5,6.2 V0.7 H11.2 V12.9 H7.4 L4.6,7.5 V12.9 H0.9 Z" fill="#fff" stroke="#333" stroke-width="1.1" stroke-linejoin="round"/>
<g transform="translate(554,298)"><rect x="0.5" y="0.5" width="11" height="15" fill="#fff" stroke="#1a4a88" stroke-width="1"/><rect x="0" y="0" width="12" height="5" fill="#0a6ad8"/><rect x="1.2" y="1" width="9.6" height="3" fill="url(#hg)"/><ellipse cx="6" cy="6.6" rx="1.8" ry="0.6" fill="#0a5a9a"/><ellipse cx="6" cy="8.6" rx="1.8" ry="0.6" fill="#0a5a9a"/><ellipse cx="6" cy="10.6" rx="1.8" ry="0.6" fill="#0a5a9a"/><ellipse cx="6" cy="12.9" rx="1.8" ry="0.9" fill="#0a5a9a"/></g>
<text x="571" y="310" class="r">IP</text>
<text x="678.5" y="310" class="r">varchar(255)</text>
<path transform="translate(757,299)" d="M0.9,0.7 H4.7 L7.5,6.2 V0.7 H11.2 V12.9 H7.4 L4.6,7.5 V12.9 H0.9 Z" fill="#fff" stroke="#333" stroke-width="1.1" stroke-linejoin="round"/>
<path d="M587.5,354.5 H721.5 Q729.5,354.5 729.5,362.5 V405.5 Q729.5,413.5 721.5,413.5 H587.5 Q579.5,413.5 579.5,405.5 V362.5 Q579.5,354.5 587.5,354.5 Z" fill="#F3B47A" stroke="#000" stroke-width="1"/>
<line x1="579" y1="369.5" x2="730" y2="369.5" stroke="#000" stroke-width="1"/>
<line x1="580" y1="389.5" x2="729" y2="389.5" stroke="#FFFFA0" stroke-width="1"/>
<text x="653.2" y="366" text-anchor="middle" class="t">Ticket_Tag</text>
<g transform="translate(592.5,376)"><path d="M2.3,5.5 V12.4 H5.2 V11.4 H6.3 V10.3 H5.2 V9.4 H6.3 V8.3 H5.2 V5.5 Z" fill="#F0CC00" stroke="#A08400" stroke-width="0.6"/><circle cx="3.7" cy="3.8" r="3.2" fill="#F4D600" stroke="#A08400" stroke-width="0.8"/><circle cx="3.9" cy="3.6" r="1.7" fill="#fff"/></g><path transform="translate(584,372)" d="M0.4,3.6 L4.6,-0.2 L4.6,1.7 C8.5,1.3 12.5,2.8 14.2,6.8 L12.2,7.4 C10.5,5.0 7.8,4.6 4.6,5.2 L4.6,7.2 Z" fill="url(#ag)"/>
<text x="603" y="384" class="bi">TicketID</text>
<text x="659.5" y="384" class="bi">integer(10)</text>
<g transform="translate(592.5,394)"><path d="M2.3,5.5 V12.4 H5.2 V11.4 H6.3 V10.3 H5.2 V9.4 H6.3 V8.3 H5.2 V5.5 Z" fill="#F0CC00" stroke="#A08400" stroke-width="0.6"/><circle cx="3.7" cy="3.8" r="3.2" fill="#F4D600" stroke="#A08400" stroke-width="0.8"/><circle cx="3.9" cy="3.6" r="1.7" fill="#fff"/></g><path transform="translate(584,390)" d="M0.4,3.6 L4.6,-0.2 L4.6,1.7 C8.5,1.3 12.5,2.8 14.2,6.8 L12.2,7.4 C10.5,5.0 7.8,4.6 4.6,5.2 L4.6,7.2 Z" fill="url(#ag)"/>
<text x="603" y="402" class="bi">TagID</text>
<text x="659.5" y="402" class="bi">integer(10)</text>
<path d="M560.5,462.5 H753.5 Q761.5,462.5 761.5,470.5 V567.5 Q761.5,575.5 753.5,575.5 H560.5 Q552.5,575.5 552.5,567.5 V470.5 Q552.5,462.5 560.5,462.5 Z" fill="#F3B47A" stroke="#000" stroke-width="1"/>
<line x1="552" y1="477.5" x2="762" y2="477.5" stroke="#000" stroke-width="1"/>
<line x1="553" y1="497.5" x2="761" y2="497.5" stroke="#FFFFA0" stroke-width="1"/>
<line x1="553" y1="515.5" x2="761" y2="515.5" stroke="#FFFFA0" stroke-width="1"/>
<line x1="553" y1="533.5" x2="761" y2="533.5" stroke="#FFFFA0" stroke-width="1"/>
<line x1="553" y1="551.5" x2="761" y2="551.5" stroke="#FFFFA0" stroke-width="1"/>
<text x="655.7" y="474" text-anchor="middle" class="t">Customer</text>
<g transform="translate(561,480)"><path d="M2.4,6 V14.6 Q2.4,15.8 4,15.8 Q5.6,15.8 5.6,14.6 V6 Z" fill="#F0CC00" stroke="#B08C00" stroke-width="0.7"/><circle cx="4" cy="3.9" r="3.4" fill="#F4D600" stroke="#B08C00" stroke-width="0.8"/><ellipse cx="4" cy="3.3" rx="1.3" ry="0.9" fill="#fff"/></g>
<text x="576" y="492" class="b">ID</text>
<text x="662.5" y="492" class="b">integer(10)</text>
<g transform="translate(559,498)"><rect x="0.5" y="0.5" width="11" height="15" fill="#fff" stroke="#1a4a88" stroke-width="1"/><rect x="0" y="0" width="12" height="5" fill="#0a6ad8"/><rect x="1.2" y="1" width="9.6" height="3" fill="url(#hg)"/><ellipse cx="6" cy="6.6" rx="1.8" ry="0.6" fill="#0a5a9a"/><ellipse cx="6" cy="8.6" rx="1.8" ry="0.6" fill="#0a5a9a"/><ellipse cx="6" cy="10.6" rx="1.8" ry="0.6" fill="#0a5a9a"/><ellipse cx="6" cy="12.9" rx="1.8" ry="0.9" fill="#0a5a9a"/></g>
<text x="576" y="510" class="r">Name</text>
<text x="662.5" y="510" class="r">varchar(255)</text>
<path transform="translate(740.5,499)" d="M0.9,0.7 H4.7 L7.5,6.2 V0.7 H11.2 V12.9 H7.4 L4.6,7.5 V12.9 H0.9 Z" fill="#fff" stroke="#333" stroke-width="1.1" stroke-linejoin="round"/>
<g transform="translate(559,516)"><rect x="0.5" y="0.5" width="11" height="15" fill="#fff" stroke="#1a4a88" stroke-width="1"/><rect x="0" y="0" width="12" height="5" fill="#0a6ad8"/><rect x="1.2" y="1" width="9.6" height="3" fill="url(#hg)"/><ellipse cx="6" cy="6.6" rx="1.8" ry="0.6" fill="#0a5a9a"/><ellipse cx="6" cy="8.6" rx="1.8" ry="0.6" fill="#0a5a9a"/><ellipse cx="6" cy="10.6" rx="1.8" ry="0.6" fill="#0a5a9a"/><ellipse cx="6" cy="12.9" rx="1.8" ry="0.9" fill="#0a5a9a"/></g>
<text x="576" y="528" class="r">Address</text>
<text x="662.5" y="528" class="r">varchar(255)</text>
<path transform="translate(740.5,517)" d="M0.9,0.7 H4.7 L7.5,6.2 V0.7 H11.2 V12.9 H7.4 L4.6,7.5 V12.9 H0.9 Z" fill="#fff" stroke="#333" stroke-width="1.1" stroke-linejoin="round"/>
<g transform="translate(559,534)"><rect x="0.5" y="0.5" width="11" height="15" fill="#fff" stroke="#1a4a88" stroke-width="1"/><rect x="0" y="0" width="12" height="5" fill="#0a6ad8"/><rect x="1.2" y="1" width="9.6" height="3" fill="url(#hg)"/><ellipse cx="6" cy="6.6" rx="1.8" ry="0.6" fill="#0a5a9a"/><ellipse cx="6" cy="8.6" rx="1.8" ry="0.6" fill="#0a5a9a"/><ellipse cx="6" cy="10.6" rx="1.8" ry="0.6" fill="#0a5a9a"/><ellipse cx="6" cy="12.9" rx="1.8" ry="0.9" fill="#0a5a9a"/></g>
<text x="576" y="546" class="r">Email</text>
<text x="662.5" y="546" class="r">varchar(255)</text>
<path transform="translate(740.5,535)" d="M0.9,0.7 H4.7 L7.5,6.2 V0.7 H11.2 V12.9 H7.4 L4.6,7.5 V12.9 H0.9 Z" fill="#fff" stroke="#333" stroke-width="1.1" stroke-linejoin="round"/>
<path transform="translate(557,552)" d="M0.4,3.6 L4.6,-0.2 L4.6,1.7 C8.5,1.3 12.5,2.8 14.2,6.8 L12.2,7.4 C10.5,5.0 7.8,4.6 4.6,5.2 L4.6,7.2 Z" fill="url(#ag)"/><g transform="translate(564,558)"><rect x="0.5" y="0.5" width="8" height="10" fill="#fff" stroke="#5a6a98" stroke-width="1"/><rect x="0" y="0" width="9" height="3.2" fill="#2a7ad8"/><rect x="1" y="1" width="6" height="1" fill="#9ac8f8"/><ellipse cx="4.5" cy="5.2" rx="1" ry="0.9" fill="#2a7ab8"/><ellipse cx="4.5" cy="8.2" rx="1" ry="1.1" fill="#2a7ab8"/></g>
<text x="576" y="564" class="i">OrganizationID</text>
<text x="662.5" y="564" class="i">integer(10)</text>
<path d="M809.5,95.5 H1024.5 Q1032.5,95.5 1032.5,103.5 V182.5 Q1032.5,190.5 1024.5,190.5 H809.5 Q801.5,190.5 801.5,182.5 V103.5 Q801.5,95.5 809.5,95.5 Z" fill="#F3B47A" stroke="#000" stroke-width="1"/>
<line x1="801" y1="110.5" x2="1033" y2="110.5" stroke="#000" stroke-width="1"/>
<line x1="802" y1="130.5" x2="1032" y2="130.5" stroke="#FFFFA0" stroke-width="1"/>
<line x1="802" y1="148.5" x2="1032" y2="148.5" stroke="#FFFFA0" stroke-width="1"/>
<line x1="802" y1="166.5" x2="1032" y2="166.5" stroke="#FFFFA0" stroke-width="1"/>
<text x="915.7" y="107" text-anchor="middle" class="t">LiveChat</text>
<g transform="translate(810,113)"><path d="M2.4,6 V14.6 Q2.4,15.8 4,15.8 Q5.6,15.8 5.6,14.6 V6 Z" fill="#F0CC00" stroke="#B08C00" stroke-width="0.7"/><circle cx="4" cy="3.9" r="3.4" fill="#F4D600" stroke="#B08C00" stroke-width="0.8"/><ellipse cx="4" cy="3.3" rx="1.3" ry="0.9" fill="#fff"/></g>
<text x="825" y="125" class="b">ID</text>
<text x="936.5" y="125" class="b">integer(10)</text>
<path transform="translate(806,131)" d="M0.4,3.6 L4.6,-0.2 L4.6,1.7 C8.5,1.3 12.5,2.8 14.2,6.8 L12.2,7.4 C10.5,5.0 7.8,4.6 4.6,5.2 L4.6,7.2 Z" fill="url(#ag)"/><g transform="translate(813,137)"><rect x="0.5" y="0.5" width="8" height="10" fill="#fff" stroke="#5a6a98" stroke-width="1"/><rect x="0" y="0" width="9" height="3.2" fill="#2a7ad8"/><rect x="1" y="1" width="6" height="1" fill="#9ac8f8"/><ellipse cx="4.5" cy="5.2" rx="1" ry="0.9" fill="#2a7ab8"/><ellipse cx="4.5" cy="8.2" rx="1" ry="1.1" fill="#2a7ab8"/></g>
<text x="825" y="143" class="i">Ticket_StaffTicketID</text>
<text x="936.5" y="143" class="i">integer(10)</text>
<path transform="translate(1008.5,132)" d="M0.9,0.7 H4.7 L7.5,6.2 V0.7 H11.2 V12.9 H7.4 L4.6,7.5 V12.9 H0.9 Z" fill="#fff" stroke="#333" stroke-width="1.1" stroke-linejoin="round"/>
<path transform="translate(806,149)" d="M0.4,3.6 L4.6,-0.2 L4.6,1.7 C8.5,1.3 12.5,2.8 14.2,6.8 L12.2,7.4 C10.5,5.0 7.8,4.6 4.6,5.2 L4.6,7.2 Z" fill="url(#ag)"/><g transform="translate(813,155)"><rect x="0.5" y="0.5" width="8" height="10" fill="#fff" stroke="#5a6a98" stroke-width="1"/><rect x="0" y="0" width="9" height="3.2" fill="#2a7ad8"/><rect x="1" y="1" width="6" height="1" fill="#9ac8f8"/><ellipse cx="4.5" cy="5.2" rx="1" ry="0.9" fill="#2a7ab8"/><ellipse cx="4.5" cy="8.2" rx="1" ry="1.1" fill="#2a7ab8"/></g>
<text x="825" y="161" class="i">Ticket_StaffStaffID</text>
<text x="936.5" y="161" class="i">integer(10)</text>
<path transform="translate(1008.5,150)" d="M0.9,0.7 H4.7 L7.5,6.2 V0.7 H11.2 V12.9 H7.4 L4.6,7.5 V12.9 H0.9 Z" fill="#fff" stroke="#333" stroke-width="1.1" stroke-linejoin="round"/>
<g transform="translate(808,167)"><rect x="0.5" y="0.5" width="11" height="15" fill="#fff" stroke="#1a4a88" stroke-width="1"/><rect x="0" y="0" width="12" height="5" fill="#0a6ad8"/><rect x="1.2" y="1" width="9.6" height="3" fill="url(#hg)"/><ellipse cx="6" cy="6.6" rx="1.8" ry="0.6" fill="#0a5a9a"/><ellipse cx="6" cy="8.6" rx="1.8" ry="0.6" fill="#0a5a9a"/><ellipse cx="6" cy="10.6" rx="1.8" ry="0.6" fill="#0a5a9a"/><ellipse cx="6" cy="12.9" rx="1.8" ry="0.9" fill="#0a5a9a"/></g>
<text x="825" y="179" class="r">Time</text>
<text x="936.5" y="179" class="r">date</text>
<path transform="translate(1008.5,168)" d="M0.9,0.7 H4.7 L7.5,6.2 V0.7 H11.2 V12.9 H7.4 L4.6,7.5 V12.9 H0.9 Z" fill="#fff" stroke="#333" stroke-width="1.1" stroke-linejoin="round"/>
<path d="M910.5,260.5 H1082.5 Q1090.5,260.5 1090.5,268.5 V329.5 Q1090.5,337.5 1082.5,337.5 H910.5 Q902.5,337.5 902.5,329.5 V268.5 Q902.5,260.5 910.5,260.5 Z" fill="#F3B47A" stroke="#000" stroke-width="1"/>
<line x1="902" y1="275.5" x2="1091" y2="275.5" stroke="#000" stroke-width="1"/>
<line x1="903" y1="295.5" x2="1090" y2="295.5" stroke="#FFFFA0" stroke-width="1"/>
<line x1="903" y1="313.5" x2="1090" y2="313.5" stroke="#FFFFA0" stroke-width="1"/>
<text x="995.2" y="272" text-anchor="middle" class="t">Ticket_Customer</text>
<g transform="translate(911,278)"><path d="M2.4,6 V14.6 Q2.4,15.8 4,15.8 Q5.6,15.8 5.6,14.6 V6 Z" fill="#F0CC00" stroke="#B08C00" stroke-width="0.7"/><circle cx="4" cy="3.9" r="3.4" fill="#F4D600" stroke="#B08C00" stroke-width="0.8"/><ellipse cx="4" cy="3.3" rx="1.3" ry="0.9" fill="#fff"/></g>
<text x="926" y="290" class="b">TicketID</text>
<text x="1019" y="290" class="b">integer(10)</text>
<g transform="translate(915.5,300)"><path d="M2.3,5.5 V12.4 H5.2 V11.4 H6.3 V10.3 H5.2 V9.4 H6.3 V8.3 H5.2 V5.5 Z" fill="#F0CC00" stroke="#A08400" stroke-width="0.6"/><circle cx="3.7" cy="3.8" r="3.2" fill="#F4D600" stroke="#A08400" stroke-width="0.8"/><circle cx="3.9" cy="3.6" r="1.7" fill="#fff"/></g><path transform="translate(907,296)" d="M0.4,3.6 L4.6,-0.2 L4.6,1.7 C8.5,1.3 12.5,2.8 14.2,6.8 L12.2,7.4 C10.5,5.0 7.8,4.6 4.6,5.2 L4.6,7.2 Z" fill="url(#ag)"/>
<text x="926" y="308" class="bi">CustomerID</text>
<text x="1019" y="308" class="bi">integer(10)</text>
<g transform="translate(915.5,318)"><path d="M2.3,5.5 V12.4 H5.2 V11.4 H6.3 V10.3 H5.2 V9.4 H6.3 V8.3 H5.2 V5.5 Z" fill="#F0CC00" stroke="#A08400" stroke-width="0.6"/><circle cx="3.7" cy="3.8" r="3.2" fill="#F4D600" stroke="#A08400" stroke-width="0.8"/><circle cx="3.9" cy="3.6" r="1.7" fill="#fff"/></g><path transform="translate(907,314)" d="M0.4,3.6 L4.6,-0.2 L4.6,1.7 C8.5,1.3 12.5,2.8 14.2,6.8 L12.2,7.4 C10.5,5.0 7.8,4.6 4.6,5.2 L4.6,7.2 Z" fill="url(#ag)"/>
<text x="926" y="326" class="bi">Ticket_ReplyID</text>
<text x="1019" y="326" class="bi">integer(10)</text>
<path d="M849.5,472.5 H1033.5 Q1041.5,472.5 1041.5,480.5 V559.5 Q1041.5,567.5 1033.5,567.5 H849.5 Q841.5,567.5 841.5,559.5 V480.5 Q841.5,472.5 849.5,472.5 Z" fill="#F3B47A" stroke="#000" stroke-width="1"/>
<line x1="841" y1="487.5" x2="1042" y2="487.5" stroke="#000" stroke-width="1"/>
<line x1="842" y1="507.5" x2="1041" y2="507.5" stroke="#FFFFA0" stroke-width="1"/>
<line x1="842" y1="525.5" x2="1041" y2="525.5" stroke="#FFFFA0" stroke-width="1"/>
<line x1="842" y1="543.5" x2="1041" y2="543.5" stroke="#FFFFA0" stroke-width="1"/>
<text x="940.2" y="484" text-anchor="middle" class="t">Remote_Assistance</text>
<g transform="translate(850,490)"><path d="M2.4,6 V14.6 Q2.4,15.8 4,15.8 Q5.6,15.8 5.6,14.6 V6 Z" fill="#F0CC00" stroke="#B08C00" stroke-width="0.7"/><circle cx="4" cy="3.9" r="3.4" fill="#F4D600" stroke="#B08C00" stroke-width="0.8"/><ellipse cx="4" cy="3.3" rx="1.3" ry="0.9" fill="#fff"/></g>
<text x="865" y="502" class="b">ID</text>
<text x="937.5" y="502" class="b">integer(10)</text>
<path transform="translate(846,508)" d="M0.4,3.6 L4.6,-0.2 L4.6,1.7 C8.5,1.3 12.5,2.8 14.2,6.8 L12.2,7.4 C10.5,5.0 7.8,4.6 4.6,5.2 L4.6,7.2 Z" fill="url(#ag)"/><g transform="translate(853,514)"><rect x="0.5" y="0.5" width="8" height="10" fill="#fff" stroke="#5a6a98" stroke-width="1"/><rect x="0" y="0" width="9" height="3.2" fill="#2a7ad8"/><rect x="1" y="1" width="6" height="1" fill="#9ac8f8"/><ellipse cx="4.5" cy="5.2" rx="1" ry="0.9" fill="#2a7ab8"/><ellipse cx="4.5" cy="8.2" rx="1" ry="1.1" fill="#2a7ab8"/></g>
<text x="865" y="520" class="i">CustomerID</text>
<text x="937.5" y="520" class="i">integer(10)</text>
<g transform="translate(848,526)"><rect x="0.5" y="0.5" width="11" height="15" fill="#fff" stroke="#1a4a88" stroke-width="1"/><rect x="0" y="0" width="12" height="5" fill="#0a6ad8"/><rect x="1.2" y="1" width="9.6" height="3" fill="url(#hg)"/><ellipse cx="6" cy="6.6" rx="1.8" ry="0.6" fill="#0a5a9a"/><ellipse cx="6" cy="8.6" rx="1.8" ry="0.6" fill="#0a5a9a"/><ellipse cx="6" cy="10.6" rx="1.8" ry="0.6" fill="#0a5a9a"/><ellipse cx="6" cy="12.9" rx="1.8" ry="0.9" fill="#0a5a9a"/></g>
<text x="865" y="538" class="r">CallTime</text>
<text x="937.5" y="538" class="r">date</text>
<path transform="translate(1016,527)" d="M0.9,0.7 H4.7 L7.5,6.2 V0.7 H11.2 V12.9 H7.4 L4.6,7.5 V12.9 H0.9 Z" fill="#fff" stroke="#333" stroke-width="1.1" stroke-linejoin="round"/>
<g transform="translate(848,544)"><rect x="0.5" y="0.5" width="11" height="15" fill="#fff" stroke="#1a4a88" stroke-width="1"/><rect x="0" y="0" width="12" height="5" fill="#0a6ad8"/><rect x="1.2" y="1" width="9.6" height="3" fill="url(#hg)"/><ellipse cx="6" cy="6.6" rx="1.8" ry="0.6" fill="#0a5a9a"/><ellipse cx="6" cy="8.6" rx="1.8" ry="0.6" fill="#0a5a9a"/><ellipse cx="6" cy="10.6" rx="1.8" ry="0.6" fill="#0a5a9a"/><ellipse cx="6" cy="12.9" rx="1.8" ry="0.9" fill="#0a5a9a"/></g>
<text x="865" y="556" class="r">Type</text>
<text x="937.5" y="556" class="r">varchar(255)</text>
<path transform="translate(1016,545)" d="M0.9,0.7 H4.7 L7.5,6.2 V0.7 H11.2 V12.9 H7.4 L4.6,7.5 V12.9 H0.9 Z" fill="#fff" stroke="#333" stroke-width="1.1" stroke-linejoin="round"/>
<path d="M1099.5,104.5 H1268.5 Q1276.5,104.5 1276.5,112.5 V173.5 Q1276.5,181.5 1268.5,181.5 H1099.5 Q1091.5,181.5 1091.5,173.5 V112.5 Q1091.5,104.5 1099.5,104.5 Z" fill="#F3B47A" stroke="#000" stroke-width="1"/>
<line x1="1091" y1="119.5" x2="1277" y2="119.5" stroke="#000" stroke-width="1"/>
<line x1="1092" y1="139.5" x2="1276" y2="139.5" stroke="#FFFFA0" stroke-width="1"/>
<line x1="1092" y1="157.5" x2="1276" y2="157.5" stroke="#FFFFA0" stroke-width="1"/>
<text x="1182.7" y="116" text-anchor="middle" class="t">LiveChatContent</text>
<path transform="translate(1096,122)" d="M0.4,3.6 L4.6,-0.2 L4.6,1.7 C8.5,1.3 12.5,2.8 14.2,6.8 L12.2,7.4 C10.5,5.0 7.8,4.6 4.6,5.2 L4.6,7.2 Z" fill="url(#ag)"/><g transform="translate(1103,128)"><rect x="0.5" y="0.5" width="8" height="10" fill="#fff" stroke="#5a6a98" stroke-width="1"/><rect x="0" y="0" width="9" height="3.2" fill="#2a7ad8"/><rect x="1" y="1" width="6" height="1" fill="#9ac8f8"/><ellipse cx="4.5" cy="5.2" rx="1" ry="0.9" fill="#2a7ab8"/><ellipse cx="4.5" cy="8.2" rx="1" ry="1.1" fill="#2a7ab8"/></g>
<text x="1115" y="134" class="i">LiveChatID</text>
<text x="1200" y="134" class="i">integer(10)</text>
<g transform="translate(1100,140)"><path d="M2.4,6 V14.6 Q2.4,15.8 4,15.8 Q5.6,15.8 5.6,14.6 V6 Z" fill="#F0CC00" stroke="#B08C00" stroke-width="0.7"/><circle cx="4" cy="3.9" r="3.4" fill="#F4D600" stroke="#B08C00" stroke-width="0.8"/><ellipse cx="4" cy="3.3" rx="1.3" ry="0.9" fill="#fff"/></g>
<text x="1115" y="152" class="b">ID</text>
<text x="1200" y="152" class="b">integer(10)</text>
<g transform="translate(1098,158)"><rect x="0.5" y="0.5" width="11" height="15" fill="#fff" stroke="#1a4a88" stroke-width="1"/><rect x="0" y="0" width="12" height="5" fill="#0a6ad8"/><rect x="1.2" y="1" width="9.6" height="3" fill="url(#hg)"/><ellipse cx="6" cy="6.6" rx="1.8" ry="0.6" fill="#0a5a9a"/><ellipse cx="6" cy="8.6" rx="1.8" ry="0.6" fill="#0a5a9a"/><ellipse cx="6" cy="10.6" rx="1.8" ry="0.6" fill="#0a5a9a"/><ellipse cx="6" cy="12.9" rx="1.8" ry="0.9" fill="#0a5a9a"/></g>
<text x="1115" y="170" class="r">Content</text>
<text x="1200" y="170" class="r">varchar(255)</text>
</g>
</svg>
</div>
<!-- splitter handle -->
<div class="abs" style="left:1137px;top:335px;width:13px;height:27px;background:#e4e4e4;border:1px solid #cfcfcf"></div>
<div class="abs" style="left:1140px;top:338px;width:1px;height:21px;background:#888"></div>
<div class="abs" style="left:1143px;top:338px;width:1px;height:21px;background:#888"></div>
<div class="abs" style="left:1145px;top:338px;width:1px;height:21px;background:#888"></div>
<!-- vertical scrollbar -->
<div class="abs" style="left:1151px;top:90px;width:16px;height:523px;background:#f0f0f0"></div>
<div class="abs" style="left:1151px;top:85px;width:16px;height:4px;background:#fff"></div>
<div class="abs" style="left:1150px;top:89px;width:17px;height:1px;background:#6a6a6a"></div>
<div class="abs" style="left:1166px;top:84px;width:1px;height:6px;background:#6a6a6a"></div>
<div class="abs" style="left:1167px;top:84px;width:1px;height:547px;background:#7f8792"></div>
<div class="abs" style="left:1168px;top:31px;width:1px;height:626px;background:#f8f8f8"></div>
<div class="abs" style="left:1151px;top:248px;width:15px;height:294px;background:#cdcdcd"></div>
<svg class="abs" style="left:1150px;top:90px" width="17" height="530">
  <path d="M5,11.5 L8.5,7.5 L12,11.5" fill="none" stroke="#555" stroke-width="1.8"/>
  <path d="M5,511.5 L8.5,515.5 L12,511.5" fill="none" stroke="#555" stroke-width="1.8"/>
</svg>
<!-- horizontal scrollbar -->
<div class="abs" style="left:127px;top:613px;width:1024px;height:17px;background:#f0f0f0"></div>
<div class="abs" style="left:126px;top:613px;width:5px;height:17px;background:#fff"></div>
<div class="abs" style="left:131px;top:613px;width:1px;height:17px;background:#6a6a6a"></div>
<div class="abs" style="left:126px;top:629px;width:6px;height:1px;background:#6a6a6a"></div>
<div class="abs" style="left:447px;top:614px;width:554px;height:15px;background:#cdcdcd"></div>
<div class="abs" style="left:126px;top:630px;width:1042px;height:1px;background:#7f8792"></div>
<svg class="abs" style="left:130px;top:613px" width="1040" height="18">
  <path d="M12.5,5 L8.5,8.5 L12.5,12" fill="none" stroke="#555" stroke-width="1.8"/>
  <path d="M1009.5,5 L1013.5,8.5 L1009.5,12" fill="none" stroke="#555" stroke-width="1.8"/>
  <g transform="translate(1029.5,9.5)">
    <path d="M0,-8 L4,-4 L-4,-4 Z M0,8 L4,4 L-4,4 Z M-8,0 L-4,-4 L-4,4 Z M8,0 L4,-4 L4,4 Z" fill="#000"/>
    <rect x="-4.5" y="-4.5" width="9" height="9" fill="#000"/>
    <rect x="-3" y="-3" width="2.2" height="2.2" fill="#fff"/><rect x="0.8" y="-3" width="2.2" height="2.2" fill="#fff"/>
    <rect x="-3" y="0.8" width="2.2" height="2.2" fill="#fff"/><rect x="0.8" y="0.8" width="2.2" height="2.2" fill="#fff"/>
  </g>
</svg>
<!-- status bar -->
<div class="abs" style="left:1px;top:631px;width:1167px;height:24px;background:linear-gradient(#f9f9f9,#eeeff0)"></div>
<div class="abs" style="left:1px;top:655px;width:1168px;height:2px;background:#fcfcfc"></div>
<svg class="abs" style="left:1095px;top:633px" width="60" height="22">
  <rect x="4.5" y="6.5" width="17" height="11" fill="#eef4fb" stroke="#5a9ae0"/>
  <path d="M5,7 L13,13 L21,7" fill="none" stroke="#5a9ae0"/>
  <path d="M39.5,2.5 H48 L53.5,8 V18.5 H39.5 Z" fill="#eef0f2" stroke="#3a8ae0"/>
  <line x1="41" y1="10" x2="52" y2="10" stroke="#c8c8c8"/><line x1="41" y1="13" x2="52" y2="13" stroke="#c8c8c8"/>
  <line x1="41" y1="17" x2="50" y2="5" stroke="#2a9ab0" stroke-width="1.3"/>
</svg>
<!-- window border -->
<div class="abs wb" style="left:0;top:0;width:1170px;height:1px"></div>
<div class="abs wb" style="left:0;top:0;width:1px;height:658px"></div>
<div class="abs wb" style="left:1169px;top:0;width:1px;height:658px"></div>
<div class="abs wb" style="left:0;top:657px;width:1170px;height:1px"></div>
</body></html>
